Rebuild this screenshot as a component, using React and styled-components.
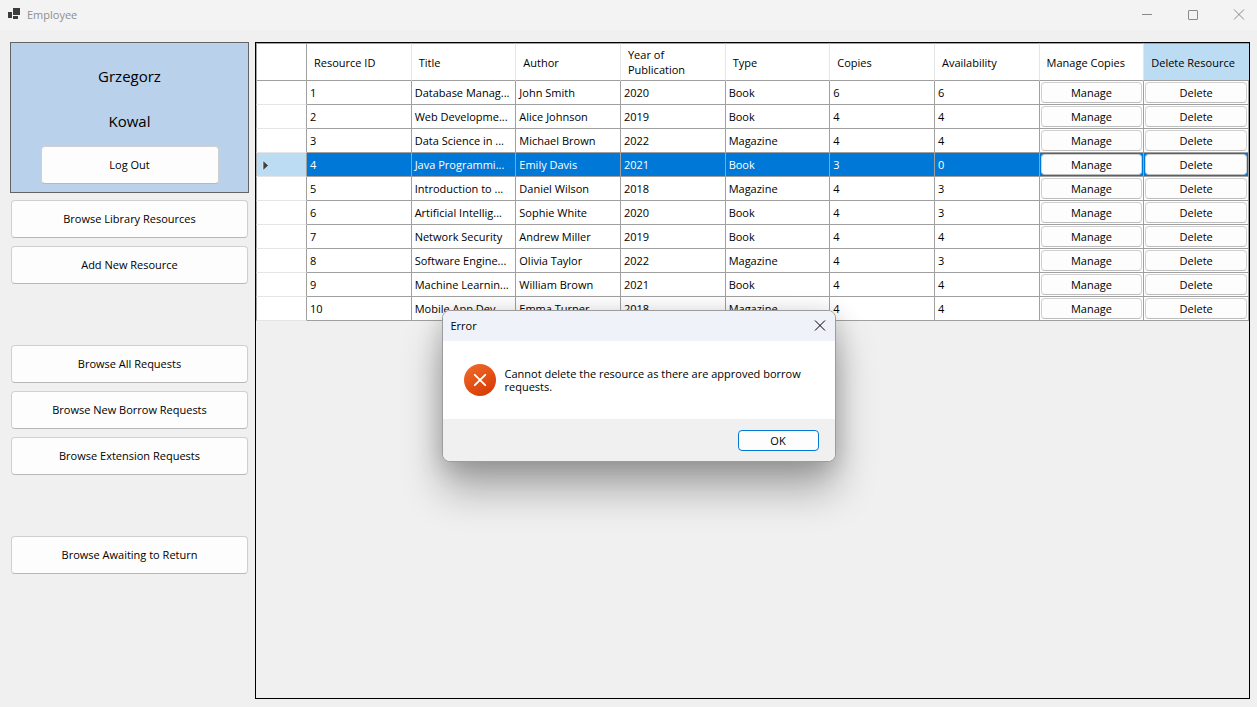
import React from 'react';
import styled, { createGlobalStyle, css } from 'styled-components';

const GlobalStyle = createGlobalStyle`
  *, *::before, *::after { box-sizing: border-box; }
  body {
    margin: 0;
    background: #f0f0f0;
    color: #000;
    font-family: "Open Sans", "Noto Sans", "Liberation Sans", sans-serif;
    font-size: 11px;
    line-height: 16px;
  }
  button { font: inherit; color: inherit; margin: 0; padding: 0; }
  h1, h2, p { margin: 0; font: inherit; }
`;

const Window = styled.div`
  position: relative;
  display: flex;
  flex-direction: column;
  min-height: 100vh;
`;

const TitleBar = styled.header`
  display: flex;
  align-items: center;
  height: 30px;
  padding-left: 8px;
  background: #f3f3f3;
  color: #8f8f8f;
`;

const WindowTitle = styled.h1`
  flex: 1;
  padding-left: 7px;
`;

const CaptionButton = styled.button`
  display: flex;
  align-items: center;
  justify-content: center;
  width: 46px;
  height: 28px;
  padding-left: 10px;
  border: 0;
  background: transparent;
  color: #8a8a8a;
`;

const Workspace = styled.div`
  flex: 1;
  display: flex;
  gap: 6px;
  padding: 12px 7px 8px 10px;
`;

const Sidebar = styled.aside`
  flex: 0 0 239px;
  display: flex;
  flex-direction: column;
  gap: 7px;
`;

const UserCard = styled.section`
  display: flex;
  flex-direction: column;
  align-items: center;
  height: 151px;
  padding-top: 21px;
  border: 1px solid #646464;
  background: #b9d1ea;
`;

const UserName = styled.p`
  height: 45px;
  font-size: 15px;
  line-height: 24px;
`;

const PushButton = styled.button`
  height: 38px;
  border: 1px solid #d0d0d0;
  border-bottom-color: #b8b8b8;
  border-radius: 4px;
  background: #fdfdfd;
`;

const LogOutButton = styled(PushButton)`
  flex: none;
  width: 178px;
  margin-top: -8px;
`;

const Nav = styled.nav`
  display: flex;
  flex-direction: column;
  gap: 61px;
  padding: 0 1px;
`;

const NavGroup = styled.div`
  display: flex;
  flex-direction: column;
  gap: 8px;
`;

const GridPanel = styled.main`
  flex: 1;
  min-width: 0;
  border: 1px solid #000;
`;

const Table = styled.table`
  width: 100%;
  table-layout: fixed;
  border-collapse: separate;
  border-spacing: 0;
  background: #fff;
`;

const HeaderRow = styled.tr`
  height: 38px;
`;

const Row = styled.tr`
  height: 24px;
  ${(p) => p.$selected && css`
    background: #0078d7;
    color: #fff;
  `}
`;

const ColumnHead = styled.th`
  padding: 0 7px;
  border-top: 1px solid #a0a0a0;
  border-right: 1px solid #e5e5e5;
  border-bottom: 1px solid #a0a0a0;
  font-weight: 400;
  line-height: 15px;
  text-align: left;
  background: ${(p) => (p.$active ? '#bcdcf4' : '#fff')};
  &:last-child { border-right: 0; }
`;

const CornerHead = styled.td`
  width: 51px;
  border: 1px solid #a0a0a0;
`;

const RowHead = styled.td`
  padding: 0 0 0 5px;
  border-left: 1px solid #a0a0a0;
  border-right: 1px solid #a0a0a0;
  border-bottom: 1px solid #e5e5e5;
  background: ${(p) => (p.$active ? '#bcdcf4' : '#fff')};
  svg { display: block; }
`;

const Cell = styled.td`
  padding: 0 0 0 3px;
  border-right: 1px solid #a0a0a0;
  border-bottom: 1px solid #a0a0a0;
  white-space: nowrap;
`;

const ButtonCell = styled.td`
  padding: 1px;
  border-right: 1px solid #a0a0a0;
  border-bottom: 1px solid #a0a0a0;
`;

const CellButton = styled.button`
  display: block;
  width: 100%;
  height: 21px;
  border: 1px solid #d0d0d0;
  border-bottom-color: #bcbcbc;
  border-radius: 4px;
  background: #fdfdfd;
  color: #000;
`;

const Dialog = styled.div`
  position: absolute;
  top: 310px;
  left: calc(50% - 187px);
  width: 394px;
  overflow: hidden;
  border: 1px solid #9c9c9c;
  border-radius: 8px;
  background: #fff;
  box-shadow: 0 28px 40px rgba(0, 0, 0, 0.3), 0 4px 24px rgba(0, 0, 0, 0.18);
`;

const DialogBar = styled.div`
  display: flex;
  align-items: center;
  justify-content: space-between;
  height: 30px;
  padding-left: 8px;
  background: #f0f2f9;
`;

const DialogClose = styled.button`
  display: flex;
  align-items: center;
  justify-content: center;
  width: 30px;
  height: 28px;
  border: 0;
  background: transparent;
`;

const DialogBody = styled.div`
  display: flex;
  align-items: center;
  gap: 9px;
  height: 78px;
  padding: 0 24px 0 21px;
  line-height: 13px;
  svg { flex: none; }
`;

const DialogFooter = styled.div`
  display: flex;
  justify-content: flex-end;
  height: 42px;
  padding: 11px 16px 0;
  background: #f0f0f0;
`;

const OkButton = styled.button`
  width: 81px;
  height: 21px;
  border: 1px solid #0078d4;
  border-radius: 4px;
  background: #fdfdfd;
`;

const columns = [
  'Resource ID', 'Title', 'Author', 'Year of Publication', 'Type',
  'Copies', 'Availability', 'Manage Copies', 'Delete Resource',
];

const resources = [
  [1, 'Database Manag...', 'John Smith', 2020, 'Book', 6, 6],
  [2, 'Web Developme...', 'Alice Johnson', 2019, 'Book', 4, 4],
  [3, 'Data Science in ...', 'Michael Brown', 2022, 'Magazine', 4, 4],
  [4, 'Java Programmi...', 'Emily Davis', 2021, 'Book', 3, 0],
  [5, 'Introduction to ...', 'Daniel Wilson', 2018, 'Magazine', 4, 3],
  [6, 'Artificial Intellig...', 'Sophie White', 2020, 'Book', 4, 3],
  [7, 'Network Security', 'Andrew Miller', 2019, 'Book', 4, 4],
  [8, 'Software Engine...', 'Olivia Taylor', 2022, 'Magazine', 4, 3],
  [9, 'Machine Learnin...', 'William Brown', 2021, 'Book', 4, 4],
  [10, 'Mobile App Dev...', 'Emma Turner', 2018, 'Magazine', 4, 4],
];

const selectedId = 4;

const navGroups = [
  ['Browse Library Resources', 'Add New Resource'],
  ['Browse All Requests', 'Browse New Borrow Requests', 'Browse Extension Requests'],
  ['Browse Awaiting to Return'],
];

const AppIcon = () => (
  <svg width="12" height="14" viewBox="0 0 12 14" fill="#3c3c3c" aria-hidden="true">
    <rect x="0" y="4" width="4" height="6" />
    <rect x="5" y="0" width="7" height="7" />
    <rect x="5" y="8" width="5" height="3" />
  </svg>
);

const CrossIcon = () => (
  <svg width="12" height="12" viewBox="0 0 12 12" fill="none" stroke="currentColor" strokeWidth="1" aria-hidden="true">
    <path d="M1 0.5L11 10.5M11 0.5L1 10.5" />
  </svg>
);

const MinimizeIcon = () => (
  <svg width="10" height="10" viewBox="0 0 10 10" aria-hidden="true">
    <rect y="4" width="10" height="1" fill="currentColor" />
  </svg>
);

const MaximizeIcon = () => (
  <svg width="10" height="10" viewBox="0 0 10 10" fill="none" stroke="currentColor" aria-hidden="true">
    <rect x="0.5" y="0.5" width="9" height="9" rx="0.5" />
  </svg>
);

const CurrentRowIcon = () => (
  <svg width="8" height="12" viewBox="0 0 8 12" aria-hidden="true">
    <path d="M1 1.5V11.5L6.5 6.5Z" fill="#404040" stroke="#fff" strokeOpacity="0.6" />
  </svg>
);

const ErrorIcon = () => (
  <svg width="32" height="32" viewBox="0 0 32 32" aria-hidden="true">
    <defs>
      <linearGradient id="errorFill" x1="0.2" y1="0" x2="0.8" y2="1">
        <stop offset="0" stopColor="#f0692a" />
        <stop offset="1" stopColor="#d63a02" />
      </linearGradient>
    </defs>
    <circle cx="16" cy="16" r="16" fill="url(#errorFill)" />
    <path d="M10.8 10.8L21.2 21.2M21.2 10.8L10.8 21.2" stroke="#fff" strokeWidth="1.9" strokeLinecap="round" />
  </svg>
);

function ResourceRow({ values }) {
  const selected = values[0] === selectedId;
  return (
    <Row $selected={selected}>
      <RowHead $active={selected}>{selected && <CurrentRowIcon />}</RowHead>
      {values.map((value, i) => <Cell key={i}>{value}</Cell>)}
      <ButtonCell><CellButton type="button">Manage</CellButton></ButtonCell>
      <ButtonCell><CellButton type="button">Delete</CellButton></ButtonCell>
    </Row>
  );
}

export default function App() {
  return (
    <>
      <GlobalStyle />
      <Window>
        <TitleBar>
          <AppIcon />
          <WindowTitle>Employee</WindowTitle>
          <CaptionButton type="button" aria-label="Minimize"><MinimizeIcon /></CaptionButton>
          <CaptionButton type="button" aria-label="Maximize"><MaximizeIcon /></CaptionButton>
          <CaptionButton type="button" aria-label="Close"><CrossIcon /></CaptionButton>
        </TitleBar>
        <Workspace>
          <Sidebar>
            <UserCard>
              <UserName>Grzegorz</UserName>
              <UserName>Kowal</UserName>
              <LogOutButton type="button">Log Out</LogOutButton>
            </UserCard>
            <Nav>
              {navGroups.map((group) => (
                <NavGroup key={group[0]}>
                  {group.map((label) => <PushButton key={label} type="button">{label}</PushButton>)}
                </NavGroup>
              ))}
            </Nav>
          </Sidebar>
          <GridPanel>
            <Table>
              <thead>
                <HeaderRow>
                  <CornerHead />
                  {columns.map((name) => (
                    <ColumnHead key={name} scope="col" $active={name === 'Delete Resource'}>{name}</ColumnHead>
                  ))}
                </HeaderRow>
              </thead>
              <tbody>
                {resources.map((values) => <ResourceRow key={values[0]} values={values} />)}
              </tbody>
            </Table>
          </GridPanel>
        </Workspace>
        <Dialog role="alertdialog" aria-labelledby="dialog-title" aria-describedby="dialog-message">
          <DialogBar>
            <h2 id="dialog-title">Error</h2>
            <DialogClose type="button" aria-label="Close"><CrossIcon /></DialogClose>
          </DialogBar>
          <DialogBody>
            <ErrorIcon />
            <p id="dialog-message">Cannot delete the resource as there are approved borrow requests.</p>
          </DialogBody>
          <DialogFooter>
            <OkButton type="button">OK</OkButton>
          </DialogFooter>
        </Dialog>
      </Window>
    </>
  );
}
